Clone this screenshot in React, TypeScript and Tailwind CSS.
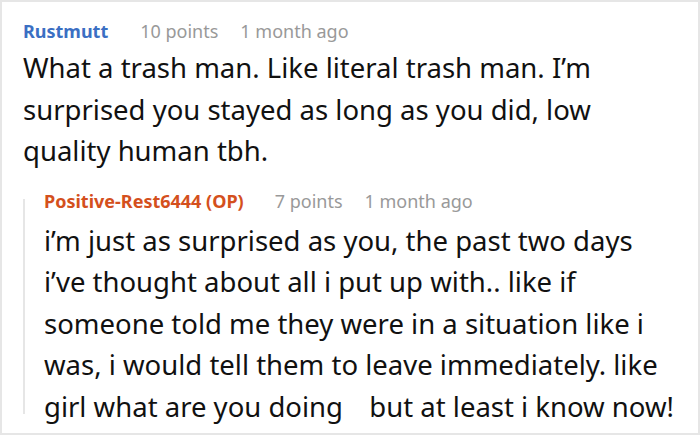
export default function App() {
  return (
    <div className="w-[700px] h-[435px] bg-white border-2 border-[#e6e6e6] pl-[21px] pr-4 pt-[16px] overflow-hidden" style={{ fontFamily: '"Noto Sans", "Open Sans", sans-serif' }}>
      {/* Top comment */}
      <div className="flex items-center text-[18px] leading-[26px]">
        <span className="font-bold text-[#3b6fc3]">Rustmutt</span>
        <span className="text-[#999999] ml-[32px]">10 points</span>
        <span className="text-[#999999] ml-[22px]">1 month ago</span>
      </div>
      <p className="text-[27.5px] leading-[41.5px] text-[#111111] mt-[3px] w-[620px]">
        What a trash man. Like literal trash man. I’m surprised you stayed as long as you did, low quality human tbh.
      </p>

      {/* Reply */}
      <div className="mt-[16px] flex">
        <div className="w-[2px] bg-[#e6e6e6] h-[215px] mt-[11px] shrink-0" />
        <div className="pl-[19px]">
          <div className="flex items-center text-[18px] leading-[26px]">
            <span className="font-bold text-[#d4501d]">Positive-Rest6444 (OP)</span>
            <span className="text-[#999999] ml-[31px]">7 points</span>
            <span className="text-[#999999] ml-[22px]">1 month ago</span>
          </div>
          <p className="text-[27.5px] leading-[41.5px] text-[#111111] mt-[6px] whitespace-nowrap">
            i’m just as surprised as you, the past two days<br />
            i’ve thought about all i put up with.. like if<br />
            someone told me they were in a situation like i<br />
            was, i would tell them to leave immediately. like<br />
            girl what are you doing <span className="inline-block w-[12px]" /> but at least i know now!
          </p>
        </div>
      </div>
    </div>
  );
}
